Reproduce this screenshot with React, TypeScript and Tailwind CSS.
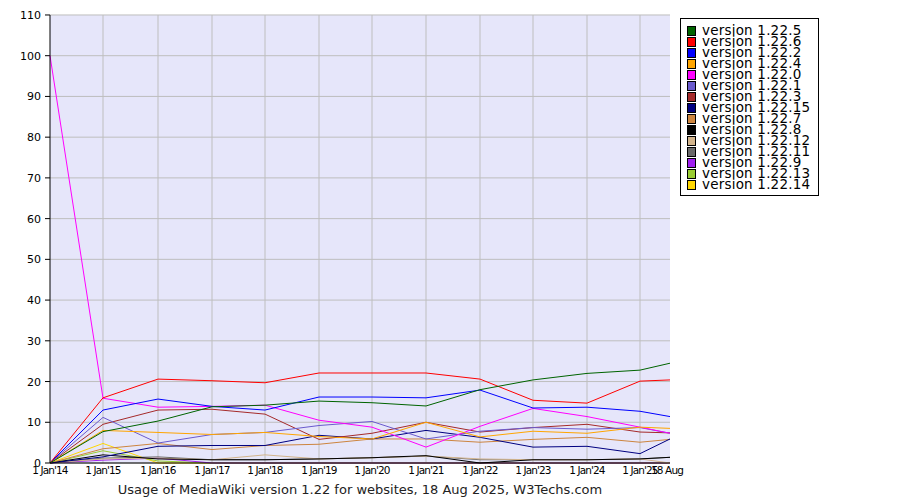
const X = [50, 103, 158, 212, 265, 319, 372, 426, 480, 533, 587, 640, 670];
const XL = ["1 Jan'14", "1 Jan'15", "1 Jan'16", "1 Jan'17", "1 Jan'18", "1 Jan'19", "1 Jan'20", "1 Jan'21", "1 Jan'22", "1 Jan'23", "1 Jan'24", "1 Jan'25"];
const y = (v: number) => 463 - v * 4.073;

const series = [
  { name: 'version 1.22.5', color: '#006400', d: [0, 7.7, 10.3, 13.8, 14.2, 15.2, 14.8, 14, 18, 20.4, 22, 22.8, 24.5] },
  { name: 'version 1.22.6', color: '#ff0000', d: [0, 16, 20.6, 20.2, 19.7, 22.1, 22.1, 22.1, 20.6, 15.4, 14.7, 20.1, 20.4] },
  { name: 'version 1.22.2', color: '#0000ff', d: [0, 13, 15.7, 13.9, 13, 16.2, 16.2, 16, 17.9, 13.5, 13.7, 12.7, 11.4] },
  { name: 'version 1.22.4', color: '#ffa500', d: [0, 8, 7.5, 7, 7.5, 6.5, 5.9, 10, 6.4, 7.8, 7.3, 8.8, 8.5] },
  { name: 'version 1.22.0', color: '#ff00ff', d: [100, 15.9, 13.7, 13.9, 14.2, 10.5, 8.8, 3.9, 9, 13.4, 11.4, 8.8, 7.3] },
  { name: 'version 1.22.1', color: '#6a5acd', d: [0, 11.2, 4.9, 7, 7.5, 9.2, 10.2, 5.9, 7.8, 8.7, 8.3, 8.7, 7.3] },
  { name: 'version 1.22.3', color: '#a52a2a', d: [0, 9.5, 13, 13.2, 12, 5.8, 7.3, 10, 7.6, 8.7, 9.5, 7.6, 7.4] },
  { name: 'version 1.22.15', color: '#000080', d: [0, 1.5, 4.1, 4.3, 4.3, 6.8, 5.9, 8, 6.3, 3.9, 4.1, 2.3, 5.9] },
  { name: 'version 1.22.7', color: '#cd853f', d: [0, 3.5, 4.8, 3.3, 4.3, 4.6, 5.9, 5.9, 5.1, 5.8, 6.3, 5.1, 5.8] },
  { name: 'version 1.22.8', color: '#000000', d: [0, 2, 1, 0.8, 0.8, 1, 1.3, 1.8, 0, 0.8, 0.8, 1, 1.4] },
  { name: 'version 1.22.12', color: '#d2b48c', d: [0, 1, 1.2, 0.8, 2, 1, 1.3, 1.7, 1, 0.8, 0.8, 1, 0] },
  { name: 'version 1.22.11', color: '#696969', d: [0, 1.2, 1.5, 0.8, 0.8, 1, 1.3, 1.7, 0.8, 0.8, 0.8, 1, 1.4] },
  { name: 'version 1.22.9', color: '#a020f0', d: [0, 0.7, 1.2, 0, 0, 0, 0, 0, 0, 0, 0, 0, 0] },
  { name: 'version 1.22.13', color: '#9acd32', d: [0, 3, 0.5, 0, 0, 0, 0, 0, 0, 0, 0, 0, 0] },
  { name: 'version 1.22.14', color: '#ffd700', d: [0, 4.8, 0, 0, 0, 0, 0, 0, 0, 0, 0, 0, 0] },
];

export default function App() {
  return (
    <div className="relative w-[900px] h-[500px] bg-white" style={{ fontFamily: '"DejaVu Sans", Verdana, sans-serif' }}>
      <div className="flex">
        <svg width="690" height="478" className="shrink-0" fontFamily="DejaVu Sans, sans-serif">
          <rect x="50" y="15" width="620" height="448" fill="#e6e6fa" />
          {Array.from({ length: 12 }, (_, i) => (
            <g key={i}>
              <line x1="50" x2="670" y1={y(i * 10)} y2={y(i * 10)} stroke="#bebebe" />
              <line x1="45" x2="50" y1={y(i * 10)} y2={y(i * 10)} stroke="#000" />
              <text x="41" y={y(i * 10) + 4} fontSize="11" textAnchor="end" fill="#000">{i * 10}</text>
            </g>
          ))}
          {XL.map((l, i) => (
            <g key={l}>
              {i > 0 && <line x1={X[i]} x2={X[i]} y1="15" y2="463" stroke="#bebebe" />}
              <text x={X[i]} y="474" fontSize="10.5" textAnchor="middle" letterSpacing="-0.9">{l}</text>
            </g>
          ))}
          <text x="667" y="474" fontSize="10.5" textAnchor="middle" letterSpacing="-0.9">18 Aug</text>
          {[...series].reverse().map((s) => (
            <polyline key={s.name} fill="none" stroke={s.color} strokeWidth="1" points={s.d.map((v, i) => `${X[i]},${y(v)}`).join(' ')} />
          ))}
          <line x1="50" x2="50" y1="15" y2="463" stroke="#000" />
          <line x1="50" x2="670" y1="463" y2="463" stroke="#000" />
        </svg>
        <div className="mt-[18px] -ml-[10px] h-[178px] w-[139px] border border-black pl-[6px] pt-[6px]">
          {series.map((s) => (
            <div key={s.name} className="flex items-center h-[11px] text-[13.5px] tracking-[0.2px] leading-none text-black">
              <span className="w-[9px] h-[10px] border border-black mr-[6px] shrink-0" style={{ background: s.color }} />
              {s.name}
            </div>
          ))}
        </div>
      </div>
      <div className="w-[720px] text-center text-[13px] text-[#222] mt-[2px]">
        Usage of MediaWiki version 1.22 for websites, 18 Aug 2025, W3Techs.com
      </div>
    </div>
  );
}
